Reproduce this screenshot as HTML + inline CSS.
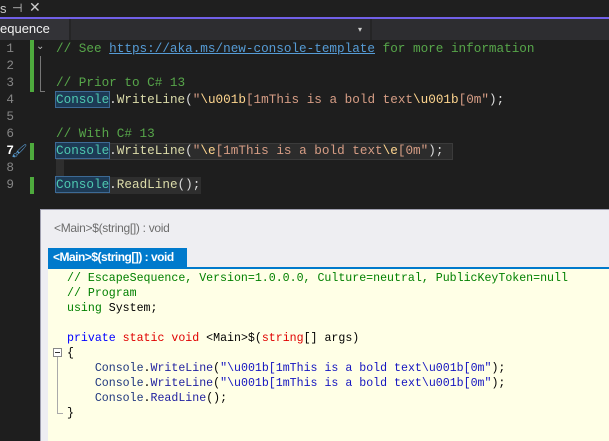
<!DOCTYPE html>
<html><head><meta charset="utf-8"><style>
*{margin:0;padding:0;box-sizing:border-box}
body{width:609px;height:441px;overflow:hidden;background:#1e1e1e;position:relative;font-family:"Liberation Mono",monospace}
.a{position:absolute;white-space:pre}
.ln{position:absolute;left:0;width:14px;text-align:right;color:#858585;font-size:12.67px;line-height:17px}
.code{position:absolute;left:56px;font-size:12.67px;line-height:17px;color:#dcdcdc;white-space:pre}
.c{color:#57a64a}.s{color:#d69d85}.e{color:#ffd68f}.t{color:#4ec9b0}.m{color:#dcdcaa}.u{color:#569cd6;text-decoration:underline}
.hl{background:#1d3a55;outline:1px solid #3d6a95}
.pc{font-family:"Liberation Mono",monospace;font-size:11.6px;line-height:15px;color:#000}
.g{color:#008000}.k{color:#0000ff}.r{color:#e00000}.n{color:#1f377f}.w{color:#1f1fa0}.st{color:#1515c0}
</style></head><body>
<div class="a" style="left:0;top:0;width:609px;height:17px;background:#1f1f1f"></div>
<div class="a" style="left:0;top:1px;color:#ccc;font:13px 'Liberation Sans',sans-serif">s</div>
<div class="a" style="left:12px;top:1px;color:#ccc;font:12px 'DejaVu Sans',sans-serif">⊣</div>
<div class="a" style="left:29px;top:0px;color:#ccc;font:14px 'DejaVu Sans',sans-serif">✕</div>
<div class="a" style="left:0;top:17px;width:609px;height:2px;background:#7160e8"></div>
<div class="a" style="left:0;top:19px;width:609px;height:21px;background:#2d2d30"></div>
<div class="a" style="left:0;top:19px;width:69px;height:21px;background:#333337"></div>
<div class="a" style="left:69px;top:19px;width:2px;height:21px;background:#252526"></div>
<div class="a" style="left:0;top:21px;color:#f1f1f1;font:13px 'Liberation Sans',sans-serif">equence</div>
<div class="a" style="left:358px;top:25px;color:#ccc;font:8px 'DejaVu Sans',sans-serif">▾</div>
<div class="a" style="left:370px;top:19px;width:2px;height:21px;background:#252526"></div>

<div class="a" style="left:30px;top:40px;width:4px;height:52px;background:#4eaa3d"></div>
<div class="a" style="left:30px;top:143px;width:4px;height:17px;background:#4eaa3d"></div>
<div class="a" style="left:30px;top:177px;width:4px;height:17px;background:#4eaa3d"></div>
<div class="a" style="left:40px;top:56px;width:1px;height:35px;background:#777"></div>
<div class="a" style="left:40px;top:91px;width:5px;height:1px;background:#777"></div>
<div class="a" style="left:36px;top:41px;color:#bbb;font:10px 'DejaVu Sans',sans-serif">⌄</div>
<div class="a" style="left:56px;top:143px;width:397px;height:17px;background:#2c2c2c;border:1px solid #3b3b3b"></div>
<div class="a" style="left:56px;top:160px;width:8px;height:17px;background:#2e2e2e"></div>
<div class="a" style="left:56px;top:177px;width:145px;height:17px;background:#2e2e2e"></div>
<div class="a" style="left:11px;top:144px;color:#5a9fd6;font:13px 'DejaVu Sans',sans-serif">🖌</div>

<div class="ln" style="top:40px">1<br>2<br>3<br>4<br>5<br>6<br><span style="color:#fff;font-weight:bold">7</span><br>8<br>9</div>
<div class="code" style="top:40px"><span class="c">// See </span><span class="u">https://aka.ms/new-console-template</span><span class="c"> for more information</span>

<span class="c">// Prior to C# 13</span>
<span class="t hl">Console</span>.<span class="m">WriteLine</span>(<span class="s">"</span><span class="e">\u001b</span><span class="s">[1mThis is a bold text</span><span class="e">\u001b</span><span class="s">[0m"</span>);

<span class="c">// With C# 13</span>
<span class="t hl">Console</span>.<span class="m">WriteLine</span>(<span class="s">"</span><span class="e">\e</span><span class="s">[1mThis is a bold text</span><span class="e">\e</span><span class="s">[0m"</span>);

<span class="t hl">Console</span>.<span class="m">ReadLine</span>();</div>

<div class="a" style="left:40px;top:209px;width:569px;height:232px;background:#eeeef2;border-left:1px solid #a0a0b0;border-top:1px solid #a0a0b0"></div>
<div class="a" style="left:54px;top:221px;color:#6d6d6d;font:12px 'Liberation Sans',sans-serif;letter-spacing:-0.3px">&lt;Main&gt;$(string[]) : void</div>
<div class="a" style="left:48px;top:248px;width:139px;height:20px;background:#007acc"></div>
<div class="a" style="left:53px;top:250px;color:#fff;font:bold 12px 'Liberation Sans',sans-serif;letter-spacing:-0.5px">&lt;Main&gt;$(string[]) : void</div>
<div class="a" style="left:48px;top:267px;width:561px;height:2px;background:#007acc"></div>
<div class="a" style="left:48px;top:269px;width:561px;height:172px;background:#ffffe6"></div>
<div class="a" style="left:53px;top:348px;width:9px;height:9px;border:1px solid #888;background:#fff"></div>
<div class="a" style="left:55px;top:352px;width:5px;height:1px;background:#333"></div>
<div class="a" style="left:57px;top:357px;width:1px;height:56px;background:#aaa"></div>
<div class="a" style="left:57px;top:413px;width:6px;height:1px;background:#aaa"></div>
<div class="a pc" style="left:67px;top:271px"><span class="g">// EscapeSequence, Version=1.0.0.0, Culture=neutral, PublicKeyToken=null</span>
<span class="g">// Program</span>
<span class="g">using</span> System;

<span class="k">private</span> <span class="r">static void</span> &lt;Main&gt;$(<span class="r">string</span>[] args)
{
    <span class="n">Console</span>.<span class="w">WriteLine</span>(<span class="st">"\u001b[1mThis is a bold text\u001b[0m"</span>);
    <span class="n">Console</span>.<span class="w">WriteLine</span>(<span class="st">"\u001b[1mThis is a bold text\u001b[0m"</span>);
    <span class="n">Console</span>.<span class="w">ReadLine</span>();
}</div>
</body></html>
